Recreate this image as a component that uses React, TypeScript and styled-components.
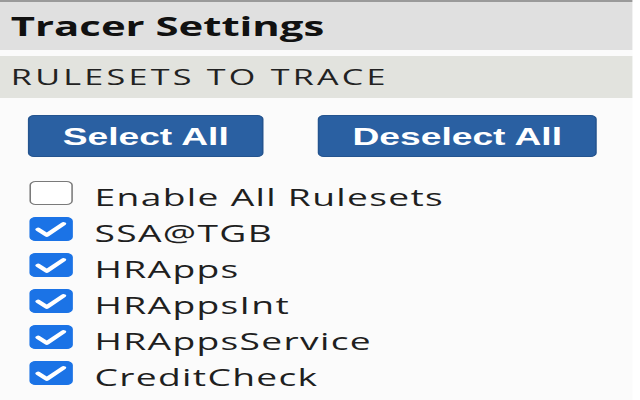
import React from "react";
import styled, { createGlobalStyle } from "styled-components";

// the screenshot is stretched sideways; lay out at natural width, then stretch
const STRETCH = 1.55;

const GlobalStyle = createGlobalStyle`
  html, body {
    margin: 0;
    padding: 0;
    background: #ffffff;
    overflow: hidden;
  }
`;

const Page = styled.div`
  width: 408px;
  height: 400px;
  background: #fbfbfb;
  transform: scaleX(${STRETCH});
  transform-origin: 0 0;
  font-family: "Open Sans", "DejaVu Sans", sans-serif;
  color: #1f1f1f;
  border-top: 2px solid #9a9a9a;
  box-sizing: border-box;
`;

const Header = styled.div`
  height: 48px;
  line-height: 48px;
  background: #e0e0e0;
  padding-left: 7px;
  font-size: 27px;
  font-weight: 700;
  color: #111;
`;

const SectionBar = styled.div`
  margin-top: 6px;
  height: 42px;
  line-height: 40px;
  background: #e2e3de;
  padding-left: 7px;
  font-size: 22px;
  letter-spacing: 2.1px;
  color: #222;
`;

const ButtonRow = styled.div`
  display: flex;
  gap: 35px;
  padding: 17px 0 0 18px;
`;

const Button = styled.button<{ $w: number }>`
  width: ${({ $w }) => $w}px;
  height: 42px;
  background: #2a60a2;
  border: 1px solid #24548f;
  border-radius: 4px;
  color: #fff;
  font-family: "Liberation Sans", Arial, sans-serif;
  font-weight: 700;
  font-size: 24px;
  padding: 2px 0 0;
`;

const List = styled.div`
  display: flex;
  flex-direction: column;
  padding: 18px 0 0 19px;
`;

const Row = styled.label`
  display: flex;
  align-items: center;
  gap: 14px;
  height: 36px;
  font-size: 24px;
  letter-spacing: 0.85px;
`;

const Box = styled.span<{ $on: boolean }>`
  width: 28px;
  height: 24px;
  box-sizing: border-box;
  border-radius: 4px;
  display: flex;
  align-items: center;
  justify-content: center;
  background: ${({ $on }) => ($on ? "#1b73e6" : "#ffffff")};
  border: 1px solid ${({ $on }) => ($on ? "#1b73e6" : "#7a7a7a")};
`;

const Text = styled.span`
  line-height: 36px;
  padding-top: 8px;
`;

const Check = () => (
  <svg width="28" height="24" viewBox="0 0 28 24">
    <polyline
      points="5,12.5 11,18.5 22.5,6.5"
      fill="none"
      stroke="#fff"
      strokeWidth="3.8"
      strokeLinecap="round"
      strokeLinejoin="round"
    />
  </svg>
);

const rulesets = [
  { name: "Enable All Rulesets", on: false },
  { name: "SSA@TGB", on: true },
  { name: "HRApps", on: true },
  { name: "HRAppsInt", on: true },
  { name: "HRAppsService", on: true },
  { name: "CreditCheck", on: true },
];

export default function App() {
  return (
    <>
      <GlobalStyle />
      <Page>
        <Header>Tracer Settings</Header>
        <SectionBar>RULESETS TO TRACE</SectionBar>
        <ButtonRow>
          <Button $w={152}>Select All</Button>
          <Button $w={180}>Deselect All</Button>
        </ButtonRow>
        <List>
          {rulesets.map((r) => (
            <Row key={r.name}>
              <Box $on={r.on}>{r.on && <Check />}</Box>
              <Text>{r.name}</Text>
            </Row>
          ))}
        </List>
      </Page>
    </>
  );
}
